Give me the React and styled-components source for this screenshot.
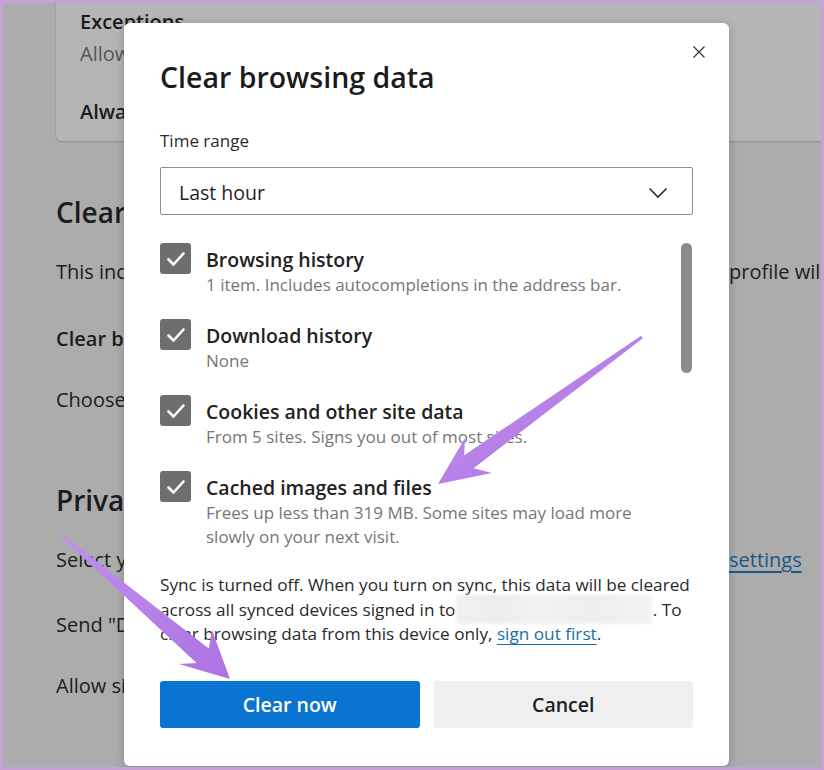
import React from "react";
import styled, { createGlobalStyle } from "styled-components";

const Global = createGlobalStyle`
  html, body { margin: 0; padding: 0; background: #c7a3d6; }
  * { box-sizing: border-box; }
`;

const FONT = `"Open Sans", "Noto Sans", Arial, sans-serif`;

const Frame = styled.div`
  position: relative;
  width: 824px;
  height: 770px;
  border-style: solid;
  border-color: #c6a0d7;
  border-width: 3px 3px 3px 3px;
  background: #acacac;
  overflow: hidden;
  font-family: ${FONT};
`;

const Backdrop = styled.div`
  display: flex;
  flex-direction: column;
  padding-left: 53px;
  color: #1c1c1c;
`;

const Card = styled.div`
  margin-top: -20px;
  padding: 27px 0 17px 24px;
  background: #b5b5b5;
  border-radius: 6px 0 0 6px;
  box-shadow: 0 1px 2px rgba(0, 0, 0, 0.18);
  display: flex;
  flex-direction: column;
  align-items: flex-start;
`;

const CardLine = styled.div`
  max-width: ${(p) => (p.$clip ? "44px" : "none")};
  overflow: hidden;
  font-size: 20px;
  line-height: 24px;
  font-weight: ${(p) => (p.$strong ? 600 : 400)};
  color: ${(p) => (p.$muted ? "#555555" : "#1c1c1c")};
  margin-top: ${(p) => p.$gap || 0}px;
  white-space: nowrap;
`;

const BgHeading = styled.div`
  width: 68px;
  overflow: hidden;
  font-size: 28px;
  line-height: 36px;
  font-weight: 600;
  margin-top: ${(p) => p.$gap}px;
  white-space: nowrap;
`;

const BgRow = styled.div`
  display: flex;
  font-size: 20px;
  line-height: 26px;
  font-weight: ${(p) => (p.$strong ? 600 : 400)};
  margin-top: ${(p) => p.$gap}px;
  white-space: nowrap;
`;

const BgLeft = styled.span`
  width: 68px;
  overflow: hidden;
  flex-shrink: 0;
`;

const BgRight = styled.span`
  margin-left: 605px;
  flex-shrink: 0;
`;

const BgLink = styled(BgRight)`
  color: #17598a;
  text-decoration: underline;
  text-underline-offset: 4px;
`;

const Dialog = styled.div`
  position: absolute;
  left: 121px;
  top: 20px;
  width: 605px;
  height: 743px;
  background: #ffffff;
  border-radius: 6px;
  box-shadow: 0 2px 10px rgba(0, 0, 0, 0.22);
  padding: 0 36px 38px;
  display: flex;
  flex-direction: column;
  color: #1f1f1f;
  & > * {
    flex-shrink: 0;
  }
`;

const CloseButton = styled.button`
  position: absolute;
  top: 17px;
  right: 18px;
  width: 24px;
  height: 24px;
  padding: 0;
  border: none;
  background: transparent;
  display: flex;
  align-items: center;
  justify-content: center;
`;

const Title = styled.h1`
  margin: 36px 0 0;
  font-size: 28.5px;
  line-height: 36px;
  font-weight: 600;
  color: #1b1b1b;
`;

const Label = styled.div`
  margin-top: 35px;
  font-size: 17px;
  line-height: 22px;
  color: #2b2b2b;
`;

const Select = styled.div`
  margin-top: 15px;
  height: 48px;
  border: 1px solid #8d8d8d;
  border-radius: 2px;
  display: flex;
  align-items: center;
  justify-content: space-between;
  padding: 3px 24px 0 18px;
  font-size: 19.5px;
  color: #1f1f1f;
`;

const ListArea = styled.div`
  margin-top: 28px;
  display: flex;
`;

const Items = styled.div`
  flex: 1;
  display: flex;
  flex-direction: column;
  gap: 22px;
`;

const ScrollTrack = styled.div`
  width: 12px;
  display: flex;
  flex-direction: column;
`;

const ScrollThumb = styled.div`
  height: 130px;
  width: 11px;
  border-radius: 6px;
  background: #8b8b8b;
`;

const Item = styled.div`
  display: flex;
  gap: 15px;
`;

const Check = styled.div`
  width: 31px;
  height: 31px;
  flex-shrink: 0;
  border-radius: 3px;
  background: #6e6e6e;
  display: flex;
  align-items: center;
  justify-content: center;
`;

const ItemText = styled.div`
  padding-top: 4px;
  display: flex;
  flex-direction: column;
`;

const ItemTitle = styled.div`
  font-size: 19.5px;
  line-height: 26px;
  font-weight: 600;
  color: #222;
`;

const ItemSub = styled.div`
  font-size: 17px;
  line-height: 24px;
  color: #767676;
`;

const SyncText = styled.p`
  margin: 24px 0 0;
  font-size: 17.2px;
  line-height: 24.5px;
  color: #2a2a2a;
  white-space: nowrap;
`;

const Blur = styled.span`
  display: inline-block;
  width: 196px;
  height: 29px;
  margin: -3px 1px -3px -4px;
  vertical-align: -5px;
  background: linear-gradient(90deg, #f1f1f1 0%, #ececec 20%, #f2f2f2 40%, #eeeeee 70%, #f3f3f3 100%);
  filter: blur(1px);
`;

const Link = styled.a`
  color: #1a6ea6;
  text-decoration: underline;
  text-underline-offset: 4px;
  text-decoration-thickness: 1px;
`;

const Buttons = styled.div`
  margin-top: 34px;
  display: flex;
  gap: 14px;
`;

const Button = styled.button`
  flex: 1;
  height: 47px;
  border: none;
  border-radius: 3px;
  font-family: ${FONT};
  font-size: 19.5px;
  font-weight: 600;
  background: ${(p) => (p.$primary ? "#0a74d1" : "#efefef")};
  color: ${(p) => (p.$primary ? "#ffffff" : "#202020")};
`;

const Overlay = styled.svg`
  position: absolute;
  left: -3px;
  top: -3px;
  pointer-events: none;
`;

const CheckIcon = () => (
  <svg width="20" height="16" viewBox="0 0 20 16">
    <path d="M2.5 8.5 L7.5 13.5 L17.5 2.5" fill="none" stroke="#fff" strokeWidth="2.6" strokeLinecap="round" strokeLinejoin="round" />
  </svg>
);

const items = [
  { title: "Browsing history", sub: ["1 item. Includes autocompletions in the address bar."] },
  { title: "Download history", sub: ["None"] },
  { title: "Cookies and other site data", sub: ["From 5 sites. Signs you out of most sites."] },
  { title: "Cached images and files", sub: ["Frees up less than 319 MB. Some sites may load more", "slowly on your next visit."] },
];

export default function App() {
  return (
    <>
      <Global />
      <Frame>
        <Backdrop>
          <Card>
            <CardLine $strong>Exceptions</CardLine>
            <CardLine $muted $clip $gap={8}>Allow all trackers on sites you choose</CardLine>
            <CardLine $strong $clip $gap={34}>Always use "Strict" tracking prevention when browsing InPrivate</CardLine>
          </Card>
          <BgHeading $gap={53}>Clear browsing data</BgHeading>
          <BgRow $gap={29}>
            <BgLeft>This includes history, passwords, cookies, and more. Only data from this</BgLeft>
            <BgRight>profile will be deleted.</BgRight>
          </BgRow>
          <BgRow $strong $gap={41}>
            <BgLeft>Clear browsing data now</BgLeft>
          </BgRow>
          <BgRow $gap={35}>
            <BgLeft>Choose what to clear every time you close the browser</BgLeft>
          </BgRow>
          <BgHeading $gap={69}>Privacy</BgHeading>
          <BgRow $gap={29}>
            <BgLeft>Select your privacy settings for Microsoft Edge. Learn more about these</BgLeft>
            <BgLink>settings</BgLink>
          </BgRow>
          <BgRow $gap={39}>
            <BgLeft>Send "Do Not Track" requests</BgLeft>
          </BgRow>
          <BgRow $gap={35}>
            <BgLeft>Allow sites to check if you have payment methods saved</BgLeft>
          </BgRow>
        </Backdrop>

        <Dialog>
          <CloseButton aria-label="Close">
            <svg width="14" height="14" viewBox="0 0 14 14">
              <path d="M1.5 1.5 L12.5 12.5 M12.5 1.5 L1.5 12.5" stroke="#3a3a3a" strokeWidth="1.3" fill="none" />
            </svg>
          </CloseButton>
          <Title>Clear browsing data</Title>
          <Label>Time range</Label>
          <Select>
            <span>Last hour</span>
            <svg width="20" height="12" viewBox="0 0 20 12">
              <path d="M1.5 1.5 L10 10 L18.5 1.5" fill="none" stroke="#2e2e2e" strokeWidth="1.6" />
            </svg>
          </Select>
          <ListArea>
            <Items>
              {items.map((it) => (
                <Item key={it.title}>
                  <Check>
                    <CheckIcon />
                  </Check>
                  <ItemText>
                    <ItemTitle>{it.title}</ItemTitle>
                    {it.sub.map((s) => (
                      <ItemSub key={s}>{s}</ItemSub>
                    ))}
                  </ItemText>
                </Item>
              ))}
            </Items>
            <ScrollTrack>
              <ScrollThumb />
            </ScrollTrack>
          </ListArea>
          <SyncText>
            Sync is turned off. When you turn on sync, this data will be cleared
            <br />
            across all synced devices signed in to <Blur />. To
            <br />
            clear browsing data from this device only, <Link>sign out first</Link>.
          </SyncText>
          <Buttons>
            <Button $primary>Clear now</Button>
            <Button>Cancel</Button>
          </Buttons>
        </Dialog>

        <Overlay width="824" height="770" viewBox="0 0 824 770">
          <defs>
            <linearGradient id="arrowFill" x1="0" y1="0" x2="1" y2="1">
              <stop offset="0" stopColor="#c190ee" />
              <stop offset="1" stopColor="#ad72e3" />
            </linearGradient>
          </defs>
          <polygon
            points="438,484 465,438 464.2,455.3 641.1,335.8 642.9,338.2 473.6,468.3 492,473"
            fill="url(#arrowFill)"
          />
          <polygon
            points="230,679 179,664 196.5,663 61,537.1 63,534.9 208.8,648.4 212,630"
            fill="url(#arrowFill)"
          />
        </Overlay>
      </Frame>
    </>
  );
}
